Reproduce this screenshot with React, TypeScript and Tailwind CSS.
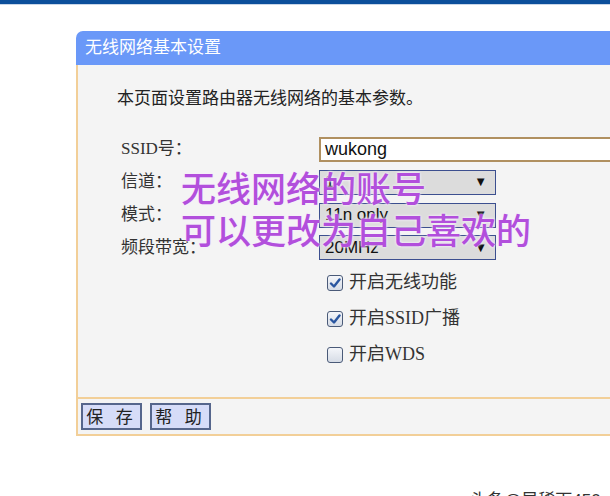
import React from 'react';

const serif = { fontFamily: '"Liberation Serif", "Noto Sans CJK SC", serif' };
const sans = { fontFamily: '"Liberation Sans", "Noto Sans CJK SC", sans-serif' };

const Select: React.FC<{ value: string }> = ({ value }) => (
  <div className="w-[177px] h-[25px] border border-[#3c4f8f] bg-[#dcdcdc] flex items-center justify-between pl-[5px] pr-[8px] text-[17px] text-[#111]" style={sans}>
    <span>{value}</span>
    <span className="text-[13px]">▼</span>
  </div>
);

const Check: React.FC<{ checked: boolean; label: string }> = ({ checked, label }) => (
  <div className="flex items-center h-[20px]">
    <div className="w-[16px] h-[16px] rounded-[3px] border border-[#4a5a78] bg-gradient-to-b from-[#f4f6fa] to-[#d6dce6] flex items-center justify-center">
      {checked && (
        <svg width="12" height="12" viewBox="0 0 12 12">
          <path d="M2 6.5 L5 9.5 L10.5 2.5" fill="none" stroke="#2a56a0" strokeWidth="2.4" strokeLinecap="round" strokeLinejoin="round" />
        </svg>
      )}
    </div>
    <span className="ml-[6px] text-[18px] text-[#333]" style={serif}>{label}</span>
  </div>
);

export default function App() {
  return (
    <div className="w-[610px] h-[496px] bg-white relative overflow-hidden">
      {/* top bar */}
      <div className="h-[4px] bg-[#0c4f9b]" />
      <div className="h-[1px] bg-[#c9d6e8]" />

      {/* panel */}
      <div className="ml-[76px] mt-[26px] w-[560px]">
        <div className="h-[34px] bg-[#6a98f8] rounded-tl-[7px] flex items-center pl-[9px] text-white text-[17px]" style={sans}>
          无线网络基本设置
        </div>
        <div className="h-[334px] bg-[#f4f4f4] border-l-2 border-b-2 border-[#f2cf98]">
          <div className="pl-[39px] pt-[21px] text-[17px] text-[#222]" style={sans}>
            本页面设置路由器无线网络的基本参数。
          </div>
          <div className="mt-[25px] pl-[43px] flex flex-col gap-[8px]">
            <div className="flex items-center h-[25px]">
              <div className="w-[198px] text-[17px] text-[#333]" style={serif}>SSID号：</div>
              <div className="flex-1 h-[25px] border-2 border-[#b09060] bg-white flex items-center pl-[4px] text-[18px] text-[#111]" style={sans}>wukong</div>
            </div>
            <div className="flex items-center h-[25px]">
              <div className="w-[198px] text-[17px] text-[#333]" style={serif}>信道：</div>
              <Select value="1" />
            </div>
            <div className="flex items-center h-[25px]">
              <div className="w-[198px] text-[17px] text-[#333]" style={serif}>模式：</div>
              <Select value="11n only" />
            </div>
            <div className="flex items-center h-[24px]">
              <div className="w-[198px] text-[17px] text-[#333]" style={serif}>频段带宽：</div>
              <Select value="20MHz" />
            </div>
          </div>
          <div className="mt-[13px] pl-[249px] flex flex-col gap-[16px]">
            <Check checked label="开启无线功能" />
            <Check checked label="开启SSID广播" />
            <Check checked={false} label="开启WDS" />
          </div>
        </div>
        <div className="h-[37px] bg-[#f4f4f4] border-l-2 border-b-2 border-[#f2cf98] flex items-center gap-[8px] pl-[3px]">
          <button className="w-[61px] h-[27px] bg-[#d6dcf8] border-2 border-[#56668c] text-[17px] text-[#222] tracking-[4px]" style={sans}>保 存</button>
          <button className="w-[61px] h-[27px] bg-[#d6dcf8] border-2 border-[#56668c] text-[17px] text-[#222] tracking-[4px]" style={sans}>帮 助</button>
        </div>
      </div>

      {/* annotation overlay */}
      <div
        className="absolute left-[181px] top-[166px] text-[35px] font-medium leading-[42px] text-[#b24fdc] [text-shadow:0_0_3px_#fff,0_0_2px_#e8c8f8]"
        style={{ fontFamily: '"Noto Sans CJK SC", sans-serif' }}
      >
        <div>无线网络的账号</div>
        <div>可以更改为自己喜欢的</div>
      </div>

      {/* watermark */}
      <div className="absolute left-[470px] top-[488px] text-[17px] text-[#333] whitespace-nowrap" style={sans}>
        头条@早稀下450
      </div>
    </div>
  );
}
